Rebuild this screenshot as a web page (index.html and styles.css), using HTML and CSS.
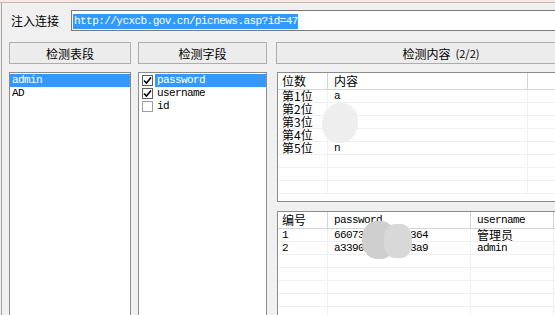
FILE: index.html
```html
<!DOCTYPE html>
<html lang="zh-CN">
<head>
  <meta charset="UTF-8" />
  <title>注入检测</title>
  <link rel="stylesheet" href="styles.css">
</head>
<body>
  <div class="topbar"></div>
  <div class="window">
    <!-- 注入地址 -->
    <div class="url-row">
      <span class="label">注入连接</span>
      <div class="url-input"><span class="selected">http://ycxcb.gov.cn/picnews.asp?id=47</span></div>
    </div>

    <div class="panels">
      <!-- 表 -->
      <div class="col col-tables">
        <div class="btn">检测表段</div>
        <div class="listbox">
          <div class="item active mono">admin</div>
          <div class="item mono">AD</div>
        </div>
      </div>

      <!-- 字段 -->
      <div class="col col-fields">
        <div class="btn">检测字段</div>
        <div class="listbox">
          <div class="check-item">
            <span class="box"><svg width="9" height="9" viewBox="0 0 9 9"><path d="M1 4.5 L3.5 7 L8 1.5" fill="none" stroke="#000" stroke-width="1.6"/></svg></span>
            <span class="mono text active">password</span>
          </div>
          <div class="check-item">
            <span class="box"><svg width="9" height="9" viewBox="0 0 9 9"><path d="M1 4.5 L3.5 7 L8 1.5" fill="none" stroke="#000" stroke-width="1.6"/></svg></span>
            <span class="mono text">username</span>
          </div>
          <div class="check-item">
            <span class="box light"></span>
            <span class="mono text">id</span>
          </div>
        </div>
      </div>

      <!-- 内容 -->
      <div class="col col-content">
        <div class="btn">检测内容 <span class="count">(2/2)</span></div>

        <div class="listview lv-chars">
          <div class="lv-row lv-head">
            <div class="cell">位数</div>
            <div class="cell">内容</div>
            <div class="cell"></div>
          </div>
          <div class="lv-row"><div class="cell">第1位</div><div class="cell mono">a</div><div class="cell"></div></div>
          <div class="lv-row"><div class="cell">第2位</div><div class="cell mono"></div><div class="cell"></div></div>
          <div class="lv-row"><div class="cell">第3位</div><div class="cell mono"></div><div class="cell"></div></div>
          <div class="lv-row"><div class="cell">第4位</div><div class="cell mono"></div><div class="cell"></div></div>
          <div class="lv-row"><div class="cell">第5位</div><div class="cell mono">n</div><div class="cell"></div></div>
          <div class="lv-row"><div class="cell"></div><div class="cell"></div><div class="cell"></div></div>
          <div class="lv-row"><div class="cell"></div><div class="cell"></div><div class="cell"></div></div>
          <div class="lv-row"><div class="cell"></div><div class="cell"></div><div class="cell"></div></div>
          <div class="blur blur-light"></div>
        </div>

        <div class="listview lv-data">
          <div class="lv-row lv-head">
            <div class="cell">编号</div>
            <div class="cell mono">password</div>
            <div class="cell mono">username</div>
            <div class="cell"></div>
          </div>
          <div class="lv-row"><div class="cell mono">1</div><div class="cell mono">66073<span class="gap"></span>364</div><div class="cell">管理员</div><div class="cell"></div></div>
          <div class="lv-row"><div class="cell mono">2</div><div class="cell mono">a3390<span class="gap"></span>3a9</div><div class="cell mono">admin</div><div class="cell"></div></div>
          <div class="lv-row"><div class="cell"></div><div class="cell"></div><div class="cell"></div><div class="cell"></div></div>
          <div class="lv-row"><div class="cell"></div><div class="cell"></div><div class="cell"></div><div class="cell"></div></div>
          <div class="lv-row"><div class="cell"></div><div class="cell"></div><div class="cell"></div><div class="cell"></div></div>
          <div class="lv-row"><div class="cell"></div><div class="cell"></div><div class="cell"></div><div class="cell"></div></div>
          <div class="lv-row"><div class="cell"></div><div class="cell"></div><div class="cell"></div><div class="cell"></div></div>
          <div class="blur blur-a"></div>
          <div class="blur blur-b"></div>
        </div>
      </div>
    </div>
  </div>
</body>
</html>
```

FILE: styles.css
```css
:root {
  --bg: #f0f0f0;
  --border: #8c8c8c;
  --btn-border: #adadad;
  --select: #3399ff;
  --grid: #f0f0f0;
}
* { margin: 0; padding: 0; box-sizing: border-box; }
body {
  width: 555px;
  height: 315px;
  overflow: hidden;
  background: var(--bg);
  font-family: "Noto Sans CJK SC", "DejaVu Sans", sans-serif;
  font-size: 12px;
  line-height: 13px;
  color: #000;
}
.mono {
  font-family: "Liberation Mono", "DejaVu Sans Mono", monospace;
  font-size: 11px;
  letter-spacing: -0.6px;
}
.topbar {
  height: 3px;
  background: #f4e7e1;
  border-bottom: 1px solid #cbb8ac;
}
.window {
  margin-left: 1px;
  border-left: 1px solid #a3a3a3;
  height: 312px;
  padding-left: 7px;
  overflow: hidden;
}
/* Linha do endereço */
.url-row {
  display: flex;
  align-items: center;
  padding-top: 7px;
}
.label { margin-left: 2px; width: 60px; flex-shrink: 0; font-size: 12px; }
.url-input {
  width: 500px;
  flex-shrink: 0;
  height: 21px;
  border: 1px solid #7a7a7a;
  background: #fff;
  padding: 1px;
  white-space: nowrap;
  overflow: hidden;
}
.url-input .selected {
  display: inline-block;
  height: 15px;
  line-height: 15px;
  background: var(--select);
  color: #fff;
  font-family: "Liberation Mono", monospace;
  font-size: 11px;
  letter-spacing: -0.55px;
  padding-left: 1px;
}
.panels {
  display: flex;
  margin-top: 11px;
}
.col { display: flex; flex-direction: column; gap: 8px; flex-shrink: 0; }
.col-tables { width: 122px; }
.col-fields { width: 129px; margin-left: 7px; }
.col-content { width: 330px; margin-left: 9px; }
.btn {
  height: 22px;
  border: 1px solid var(--btn-border);
  background: #ececec;
  display: flex;
  align-items: center;
  justify-content: center;
  font-size: 12px;
}
.btn .count { font-size: 11px; margin-left: 5px; }
.listbox {
  height: 250px;
  background: #fff;
  border: 1px solid var(--border);
  padding-top: 1px;
}
.item { height: 13px; line-height: 13px; padding-left: 2px; }
.item.active { background: var(--select); color: #fff; }
.check-item {
  display: flex;
  align-items: center;
  height: 13px;
  padding-left: 3px;
}
.box {
  width: 11px;
  height: 11px;
  flex-shrink: 0;
  border: 1px solid #606060;
  background: #fff;
  display: flex;
  align-items: center;
  justify-content: center;
}
.box.light { border-color: #a0a0a0; }
.check-item .text { margin-left: 2px; flex: 1; height: 13px; line-height: 13px; padding-left: 2px; }
.check-item .text.active { background: var(--select); color: #fff; }
/* Listas de resultados */
.listview {
  position: relative;
  background: #fff;
  border: 1px solid var(--border);
  border-right: none;
  overflow: hidden;
}
.lv-chars { height: 130px; margin-left: 1px; }
.lv-data { height: 110px; margin-left: 1px; margin-top: 1px; }
.lv-row {
  display: grid;
  height: 13px;
  border-bottom: 1px solid var(--grid);
}
.lv-chars .lv-row { grid-template-columns: 50px 200px 1fr; }
.lv-data .lv-row { grid-template-columns: 50px 143px 83px 1fr; }
.lv-row .cell {
  border-right: 1px solid var(--grid);
  padding-left: 4px;
  white-space: nowrap;
  overflow: hidden;
  line-height: 12px;
}
.lv-row .cell + .cell { padding-left: 6px; }
.lv-row.lv-head {
  height: 17px;
  border-bottom: 1px solid #d5d5d5;
}
.lv-head .cell {
  border-right: 1px solid #d5d5d5;
  line-height: 16px;
}
.gap { display: inline-block; width: 46px; }
.blur { position: absolute; }
.blur-light {
  left: 44px;
  top: 30px;
  width: 36px;
  height: 40px;
  border-radius: 50% 45% 50% 45%;
  background: #eeeeee;
}
.blur-a {
  left: 84px;
  top: 9px;
  width: 34px;
  height: 38px;
  border-radius: 45%;
  background: #cfcfcf;
}
.blur-b {
  left: 106px;
  top: 12px;
  width: 28px;
  height: 34px;
  border-radius: 40%;
  background: #d8d8d8;
}
```
